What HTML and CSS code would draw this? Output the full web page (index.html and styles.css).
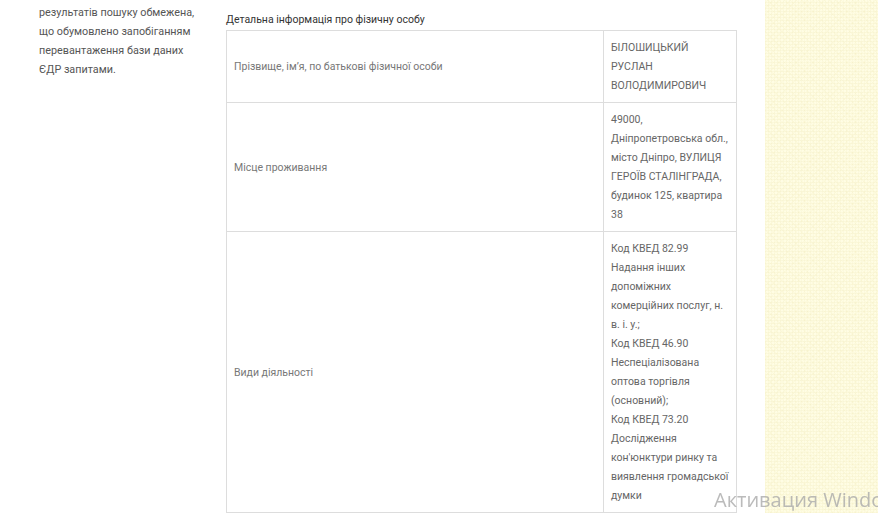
FILE: index.html
```html
<!DOCTYPE html>
<html lang="uk">
<head>
<meta charset="utf-8">
<title>Детальна інформація</title>
<link rel="stylesheet" href="styles.css">
</head>
<body>
<div class="page">
  <div class="content">
    <aside class="sidebar">
      <p>результатів пошуку обмежена, що обумовлено запобіганням перевантаження бази даних ЄДР запитами.</p>
    </aside>
    <main class="main">
      <h2 class="title">Детальна інформація про фізичну особу</h2>
      <table class="info">
        <tr class="r1">
          <td class="label">Прізвище, ім’я, по батькові фізичної особи</td>
          <td class="value">БІЛОШИЦЬКИЙ РУСЛАН ВОЛОДИМИРОВИЧ</td>
        </tr>
        <tr>
          <td class="label">Місце проживання</td>
          <td class="value">49000, Дніпропетровська обл., місто Дніпро, ВУЛИЦЯ ГЕРОЇВ СТАЛІНГРАДА, будинок 125, квартира 38</td>
        </tr>
        <tr>
          <td class="label">Види діяльності</td>
          <td class="value">Код КВЕД 82.99 Надання інших допоміжних комерційних послуг, н. в. і. у.;<br>Код КВЕД 46.90 Неспеціалізована оптова торгівля (основний);<br>Код КВЕД 73.20 Дослідження кон'юнктури ринку та виявлення громадської думки</td>
        </tr>
      </table>
    </main>
  </div>
  <div class="pattern"></div>
</div>
<div class="watermark">Активация Windows</div>
</body>
</html>
```
FILE: styles.css
```css
html, body {
  margin: 0;
  padding: 0;
  height: 100%;
  overflow: hidden;
}
body {
  font-family: Roboto, "Liberation Sans", sans-serif;
  font-size: 10.5px;
  line-height: 19px;
  background: #fff;
}
.page {
  display: flex;
  height: 100%;
}
.content {
  width: 765px;
  background: #fff;
  display: flex;
}
.sidebar {
  width: 160px;
  padding: 3px 27px 0 39px;
  color: #555;
  font-size: 10.8px;
}
.sidebar p {
  margin: 0;
}
.main {
  width: 511px;
  padding-top: 10px;
}
.title {
  margin: 0;
  font-size: 10.5px;
  font-weight: normal;
  line-height: 20px;
  color: #333;
}
.info {
  border-collapse: collapse;
  width: 511px;
}
.info td {
  border: 1px solid #ddd;
  padding: 7px 4px 7px 7px;
  vertical-align: middle;
}
.label {
  color: #777;
}
.info td.value {
  width: 121px;
  color: #666;
  vertical-align: top;
}
.pattern {
  flex: 1;
  background-color: #fffde4;
  background-image:
    repeating-linear-gradient(45deg, rgba(240,232,180,0.14) 0 1px, transparent 1px 4px),
    repeating-linear-gradient(-45deg, rgba(240,232,180,0.14) 0 1px, transparent 1px 4px),
    repeating-linear-gradient(0deg, rgba(240,234,190,0.25) 0 1px, transparent 1px 3px),
    repeating-linear-gradient(90deg, rgba(240,234,190,0.2) 0 1px, transparent 1px 3px);
}
.watermark {
  position: fixed;
  left: 714px;
  top: 487px;
  font-family: "Open Sans", "Noto Sans", sans-serif;
  font-size: 20px;
  color: rgba(170,170,170,0.8);
  white-space: nowrap;
  line-height: 26px;
}
```
